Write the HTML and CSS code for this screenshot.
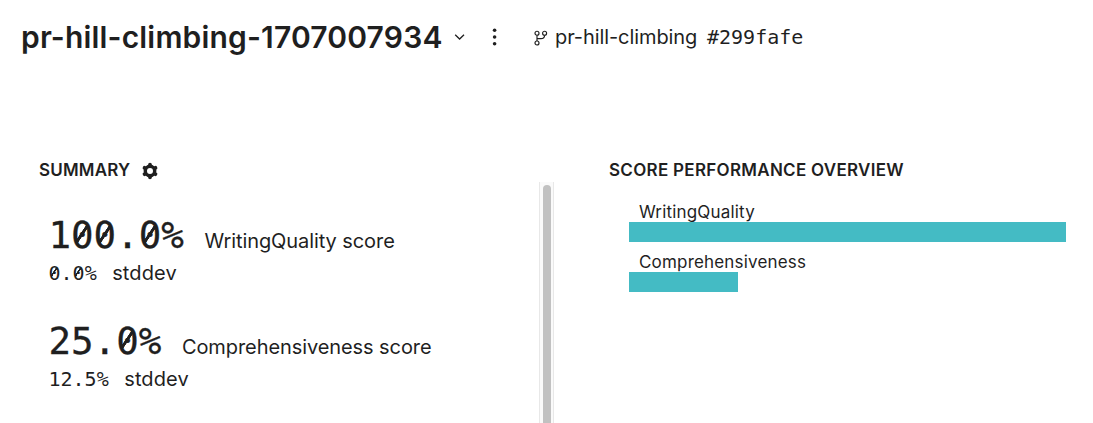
FILE: index.html
```html
<!DOCTYPE html>
<html lang="en">
<head>
<meta charset="utf-8">
<title>pr-hill-climbing-1707007934</title>
<link rel="stylesheet" href="styles.css">
</head>
<body>
<header class="header">
  <h1 class="title">pr-hill-climbing-1707007934</h1>
  <svg class="chevron" width="12" height="8" viewBox="0 0 12 8"><path d="M1.2 1.8 5.600 6 10 1.800" fill="none" stroke="currentColor" stroke-width="1.3"/></svg>
  <svg class="dots" width="6" height="20" viewBox="0 0 6 20"><circle cx="2.6" cy="3.2" r="1.8"/><circle cx="2.6" cy="10" r="1.8"/><circle cx="2.6" cy="16.8" r="1.8"/></svg>
  <svg class="branch" width="14" height="16" viewBox="0 0 14 16" fill="none" stroke="currentColor" stroke-width="1.15"><circle cx="3" cy="3.2" r="2"/><circle cx="10.6" cy="3.2" r="2"/><circle cx="3" cy="13" r="2"/><path d="M3 5.200V11M10.600 5.200C10.600 7.800 9.500 8.600 7 8.600H3"/></svg>
  <span class="branch-name">pr-hill-climbing</span>
  <span class="commit">#299fafe</span>
</header>
<main class="panels">
  <section class="summary">
    <div class="heading"><h2 class="summary-title">SUMMARY</h2>
      <svg class="gear" width="18" height="18" viewBox="0 0 18 18" fill="none" stroke="currentColor"><circle cx="9" cy="9" r="4.700" stroke-width="3.400"/><path stroke-width="3.800" stroke-linecap="round" d="M9 3.300V2.700M9 14.700v.6M13.940 6.150l.52-.3M13.940 11.850l.52.3M4.060 6.150l-.52-.3M4.060 11.850l-.52.3"/></svg>
    </div>
    <div class="summary-body">
      <div class="metrics">
        <article class="metric">
          <div class="score"><span class="value">1<span class="zero">0</span><span class="zero">0</span>.<span class="zero">0</span>%</span><span class="label">WritingQuality score</span></div>
          <div class="deviation"><span class="small-value"><span class="zero">0</span>.<span class="zero">0</span>%</span><span class="label unit">stddev</span></div>
        </article>
        <article class="metric">
          <div class="score"><span class="value">25.<span class="zero">0</span>%</span><span class="label">Comprehensiveness score</span></div>
          <div class="deviation"><span class="small-value">12.5%</span><span class="label unit">stddev</span></div>
        </article>
      </div>
      <div class="scrollbar"><div class="thumb"></div></div>
    </div>
  </section>
  <section class="overview">
    <div class="heading"><h2>SCORE PERFORMANCE OVERVIEW</h2></div>
    <div class="chart">
      <div class="row"><span class="bar-label">WritingQuality</span><div class="bar" style="width:100%"></div></div>
      <div class="row"><span class="bar-label">Comprehensiveness</span><div class="bar" style="width:25%"></div></div>
    </div>
  </section>
</main>
</body>
</html>
```

FILE: styles.css
```css
* { box-sizing: border-box; }
body { margin: 0; height: 423px; overflow: hidden; background: #fff; color: #1f1f1f; font-family: Inter, sans-serif; white-space: nowrap; display: flex; flex-direction: column; }
h1, h2 { margin: 0; }
svg { flex: none; display: block; }
.header { height: 76px; padding-left: 21px; padding-bottom: 2px; display: flex; align-items: center; flex: none; }
.title { width: 433px; font-size: 30px; font-weight: 600; line-height: 36px; letter-spacing: 0.17px; }
.dots { margin-left: 26px; fill: currentColor; }
.branch { margin-left: 36px; margin-right: 7px; margin-top: 2px; }
.branch-name { width: 152px; font-size: 20px; line-height: 24px; letter-spacing: -0.08px; }
.commit, .value, .small-value { font-family: "DejaVu Sans Mono", monospace; }
.commit { font-size: 20px; line-height: 24px; }
.panels { flex: 1; min-height: 0; padding-top: 80px; display: flex; }
.summary { width: 609px; padding-left: 39px; display: flex; flex-direction: column; }
.heading { height: 26px; padding-top: 2px; display: flex; align-items: center; gap: 11px; flex: none; }
.heading h2 { font-size: 17px; line-height: 24px; font-weight: 600; letter-spacing: 0.29px; }
.heading .summary-title { letter-spacing: 0.2px; }
.gear { margin-top: 1px; margin-left: -0.5px; }
.summary-body { flex: 1; min-height: 0; display: flex; }
.metrics { width: 500px; padding: 26px 0 0 10px; }
.metric { height: 106px; }
.score { height: 54px; display: flex; align-items: baseline; gap: 20px; line-height: 54px; }
.value { font-size: 37.5px; margin-left: -0.6px; margin-right: 0.6px; -webkit-text-stroke: 0.3px currentColor; }
.label { font-size: 20px; letter-spacing: -0.08px; }
.label.unit { letter-spacing: 0.12px; }
.deviation { height: 22px; display: flex; align-items: baseline; gap: 15px; line-height: 22px; }
.small-value { font-size: 20px; margin-left: -0.5px; margin-right: 0.5px; }
.zero { background: linear-gradient(to bottom right, transparent 41%, currentColor 44% 56%, transparent 59%) 0.14em 0.32em / 0.32em 0.48em no-repeat; }
.scrollbar { width: 15px; padding: 3px 3px 0; background: #fafafa; border: solid #e8e8e8; border-width: 0 1px; height: 100%; }
.thumb { width: 8px; height: 100%; border-radius: 4px 4px 0 0; background: #c1c1c1; }
.chart { width: 437px; margin: 20px 0 0 20px; }
.row { height: 50px; }
.bar-label { display: block; height: 20px; line-height: 20px; font-size: 17px; padding-left: 10px; letter-spacing: 0.18px; }
.bar { height: 20px; background: #44bbc4; }
```
